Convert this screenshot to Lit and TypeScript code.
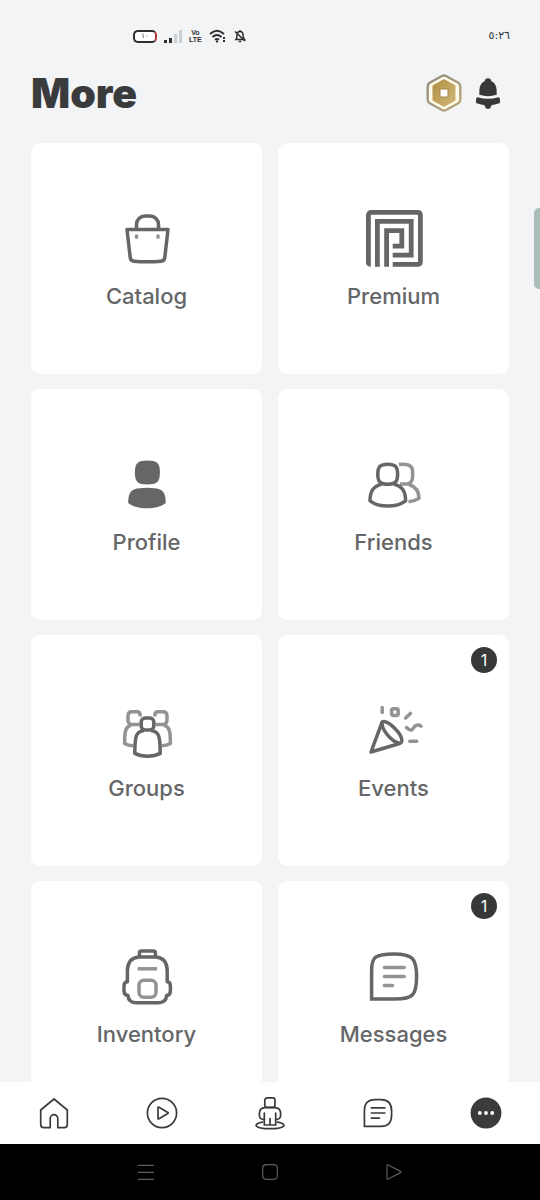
import { LitElement, html, svg, css, nothing } from "lit";
import type { SVGTemplateResult } from "lit";
import { customElement, property } from "lit/decorators.js";

interface Tile {
  label: string;
  icon: SVGTemplateResult;
  count?: number;
}

const catalog = svg`
  <path d="M12 22.5H53L49.8 50.5Q49.4 54 46 54.2Q32.5 55.4 19 54.2Q15.6 54 15.2 50.5Z" />
  <path d="M21.5 22V17.5A8.5 8.5 0 0 1 30 9H35A8.5 8.5 0 0 1 43.5 17.5V22" />
  <ellipse class="soft-fill" cx="21.5" cy="29.5" rx="1.8" ry="2.6" />
  <ellipse class="soft-fill" cx="43" cy="29.5" rx="1.8" ry="2.6" />`;

const premium = svg`
  <g stroke-width="4.8" stroke-linejoin="miter">
    <path d="M6.4 57V8.4Q6.4 5.4 9.4 5.4H55.4Q58.4 5.4 58.4 8.4V54.4Q58.4 57.4 55.4 57.4H30.7" />
    <path class="solid" d="M4 56H8.8V59.8Q4.6 59.8 4 56Z" stroke="none" />
    <path d="M15.4 59.7V14.4H49.2V48.2H30.7" />
    <path d="M24.6 59.7V23.7H39.8V39.2H30.7" />
  </g>`;

const profile = svg`
  <g class="solid" stroke="none">
    <path d="M32.4 7.5C42 7.5 44.9 10 44.9 19.5C44.9 29 42 31.5 32.4 31.5C22.8 31.5 19.9 29 19.9 19.5C19.9 10 22.8 7.5 32.4 7.5Z" />
    <path d="M13.2 50C13.2 39 16.5 35.6 25 35.2Q32 34.4 39 35.2C47.5 35.6 50.8 39 50.8 50C46 53.7 40 55.3 32 55.3S18 53.7 13.2 50Z" />
  </g>`;

const friends = svg`
  <g class="soft">
    <path d="M37 11.4Q40.5 10.9 44 11.4Q50.3 12 50.6 18V23.5Q50.4 30 45.5 31H38" />
    <path d="M47 31.5C54.5 34 57 38.5 57 45.4Q53 48 46.5 48.8" />
  </g>
  <path d="M25.7 11.2C33 11.2 35.6 13.4 35.6 21.2C35.6 29 33 31.2 25.7 31.2C18.4 31.2 15.8 29 15.8 21.2C15.8 13.4 18.4 11.2 25.7 11.2Z" />
  <path d="M19.5 31.2C10.5 33.2 8 39 8 47.8C13 51.5 19 53 25.8 53S38.6 51.5 43.6 47.8C43.6 39 41 33.2 32 31.2" />`;

const groups = svg`
  <g class="soft">
    <path d="M25.2 17.5V16.5Q25 12.8 22 12.8H17Q13.2 12.8 13 16.5V21.5Q13.2 25.2 17 25.6H24.5" />
    <path d="M16 26.2C10.5 28 9.6 32 9.6 44.6Q13 46.6 18.4 46.8" />
    <path d="M39.8 17.5V16.5Q40 12.8 43 12.8H48Q51.8 12.8 52 16.5V21.5Q51.8 25.2 48 25.6H40.5" />
    <path d="M49 26.2C54.5 28 55.4 32 55.4 44.6Q52 46.6 46.6 46.8" />
  </g>
  <rect x="26.2" y="19" width="12.6" height="12" rx="4" />
  <path d="M29 31.4C21 32.4 19.8 37 19.8 54.4Q25 57.2 32.5 57.2T45.2 54.4C45.2 37 44 32.4 36 31.4" />`;

const events = svg`
  <path d="M9 53L20.2 22.8C26 20.8 40.5 35 39.8 42.2Q39.5 44 36 45Z" />
  <path d="M20.2 22.8C18.5 29.3 29 42.8 37.5 44.3" />
  <g class="soft" stroke-linecap="round">
    <path d="M20.2 8.6V13.4" />
    <rect x="29.6" y="9.8" width="6.6" height="6.6" rx="2" />
    <path d="M43.6 19L48.4 14.4" />
    <path d="M44.5 28.6C49 33 50.5 30.5 51.8 28.5S56 25 59 27.2" />
    <path d="M47.8 42.2H54.6" />
  </g>`;

const inventory = svg`
  <path d="M24.4 12V8Q24.4 6 26.4 6H38.4Q40.4 6 40.4 8V12" />
  <path d="M24 12H41Q51.5 12.6 52.2 25V36.8Q55.4 37 55.4 41V46Q55.2 50.2 51.6 50.6Q51 57.6 43.5 57.7H21Q13.6 57.6 13 50.6Q9.2 50.2 9 46V41Q9 37 12.4 36.8V25Q13.1 12.6 24 12Z" />
  <path class="soft" d="M22.6 23.8H42" />
  <rect class="soft" x="24" y="35.2" width="17" height="17" rx="5" />`;

const messages = svg`
  <path stroke-linejoin="miter" d="M9.6 54V26C9.6 12 13 9 32 8.9C50 9 54.6 13 54.6 31.5C54.6 50 51 54 33 54Z" />
  <g class="soft" stroke-linecap="round">
    <path d="M22.4 22.4H42.2M22.4 31.4H42.2M22.4 40.4H30.6" />
  </g>`;

const TILES: Tile[] = [
  { label: "Catalog", icon: catalog },
  { label: "Premium", icon: premium },
  { label: "Profile", icon: profile },
  { label: "Friends", icon: friends },
  { label: "Groups", icon: groups },
  { label: "Events", icon: events, count: 1 },
  { label: "Inventory", icon: inventory },
  { label: "Messages", icon: messages, count: 1 },
];

const TABS: { name: string; icon: SVGTemplateResult }[] = [
  {
    name: "Home",
    icon: svg`<path d="M16 2L29.3 13V27.5Q29.3 30.6 26.3 30.6H19.8V21.5A3.8 3.8 0 0 0 12.2 21.5V30.6H5.7Q2.7 30.6 2.7 27.5V13Z" />`,
  },
  {
    name: "Discover",
    icon: svg`<circle cx="16" cy="16" r="14.6" />
      <path d="M12 10.8Q12 9.6 13 10.2L21.8 15.4Q22.6 16 21.8 16.6L13 21.8Q12 22.4 12 21.2Z" />`,
  },
  {
    name: "Avatar",
    icon: svg`<rect x="10.8" y="0.8" width="10.2" height="9.6" rx="2.4" />
      <path d="M10.4 22.6Q5.6 22.4 5.4 18.5V16Q5.6 11 11 10.6H21Q26.4 11 26.6 16V18.5Q26.4 22.4 21.6 22.6" />
      <path d="M10.3 16V28H21.7V16M16 21.5V28" />
      <path d="M8.5 25.2C-1 26.6-1 31.6 16 31.7C33 31.6 33 26.6 23.5 25.2" />`,
  },
  {
    name: "Chat",
    icon: svg`<path d="M2.4 29.4V14Q2.4 2.6 13 2.6H19Q29.6 2.6 29.6 14V18Q29.6 29.4 19 29.4Z" />
      <path d="M9.4 10.8H22.8M9.4 16H22.8M9.4 21.2H17.4" />`,
  },
  {
    name: "More",
    icon: svg`<circle class="dark" cx="16" cy="16" r="15.4" stroke="none" />
      <g class="light" stroke="none"><circle cx="9.8" cy="16" r="1.9" /><circle cx="16" cy="16" r="1.9" /><circle cx="22.2" cy="16" r="1.9" /></g>`,
  },
];

@customElement("status-bar")
class StatusBar extends LitElement {
  static styles = css`
    :host {
      display: flex;
      align-items: center;
      justify-content: space-between;
      height: 72px;
      padding: 0 30px 0 133px;
      color: #2c2e30;
      font-family: "DejaVu Sans", sans-serif;
    }
    .signals {
      display: flex;
      align-items: center;
      gap: 7px;
    }
    .battery {
      display: flex;
      align-items: center;
      justify-content: center;
      box-sizing: border-box;
      width: 24px;
      height: 13px;
      border: 2px solid #2c2e30;
      border-right-color: #b5343c;
      border-radius: 5px;
      background: #fff;
      font-size: 7px;
      line-height: 8px;
    }
    .volte {
      font: bold 7px/7px "Liberation Sans", sans-serif;
      text-align: center;
    }
    .volte span {
      display: block;
    }
    .time {
      font-size: 11px;
      line-height: 16px;
    }
    svg {
      display: block;
      fill: none;
      stroke: currentColor;
    }
  `;
  render() {
    return html`
      <div class="signals">
        <span class="battery">١٠</span>
        <svg width="18" height="14" viewBox="0 0 18 14" stroke-width="3">
          <path d="M1.5 11V14M6.5 9V14" />
          <path d="M11.5 5V14M16.5 1V14" stroke="#cdd0d2" />
        </svg>
        <span class="volte"><span>Vo</span><span>LTE</span></span>
        <svg width="18" height="14" viewBox="0 0 18 14" stroke-width="2">
          <path d="M1 5Q8 -1.5 15 5M3.5 8Q8 4 12.5 8M6 10.8Q8 9.2 10 10.8" />
          <path d="M8 11.5V13.5M15 8V10M15 11V13" />
        </svg>
        <svg width="12" height="14" viewBox="0 0 12 14" stroke-width="1.5">
          <path d="M2 10.5Q3 9 3 6Q3 2.5 6 2.5T9 6Q9 9 10.5 10.5ZM6 1V2.5M4.8 12.5H7.2M1 2.5L11 12" />
        </svg>
      </div>
      <time class="time">٥:٢٦</time>
    `;
  }
}

@customElement("menu-tile")
class MenuTile extends LitElement {
  @property() label = "";
  @property({ type: Number }) count = 0;
  @property({ attribute: false }) icon?: SVGTemplateResult;

  static styles = css`
    :host {
      display: block;
    }
    .tile {
      position: relative;
      display: flex;
      flex-direction: column;
      align-items: center;
      justify-content: center;
      gap: 11px;
      aspect-ratio: 1;
      border-radius: 9px;
      background: #fff;
      color: #656667;
      text-decoration: none;
      font-size: 22px;
      font-weight: 500;
      line-height: 28px;
    }
    .icon {
      width: 64px;
      height: 64px;
      fill: none;
      stroke: currentColor;
      stroke-width: 3.5;
      stroke-linejoin: round;
    }
    .soft {
      stroke: #929394;
    }
    .soft-fill {
      fill: #929394;
      stroke: none;
    }
    .solid {
      fill: currentColor;
    }
    .badge {
      position: absolute;
      top: 12px;
      right: 12px;
      width: 26px;
      border-radius: 13px;
      background: #36383a;
      color: #fff;
      font-size: 16px;
      font-weight: 400;
      line-height: 26px;
      text-align: center;
    }
  `;
  render() {
    return html`<a class="tile" href="#${this.label.toLowerCase()}">
      <svg class="icon" viewBox="0 0 64 64" aria-hidden="true">${this.icon}</svg>
      <span>${this.label}</span>
      ${this.count ? html`<span class="badge">${this.count}</span>` : nothing}
    </a>`;
  }
}

@customElement("app-root")
class AppRoot extends LitElement {
  static styles = css`
    :host {
      position: relative;
      display: flex;
      flex-direction: column;
      height: 100vh;
      overflow: hidden;
      background: #f2f4f6;
      color: #393b3d;
      font-family: Inter, sans-serif;
    }
    button {
      display: flex;
      align-items: center;
      justify-content: center;
      padding: 0;
      border: 0;
      background: none;
      color: inherit;
      cursor: pointer;
    }
    .header {
      display: flex;
      align-items: center;
      justify-content: space-between;
      height: 42px;
      padding: 0 40px 0 31px;
    }
    .title {
      margin: 0;
      font-size: 41px;
      font-weight: 900;
      line-height: 40px;
    }
    .actions {
      display: flex;
      align-items: center;
      gap: 14px;
    }
    .content {
      flex: 1;
      min-height: 0;
      padding: 29px 31px 0;
      overflow: auto;
      scrollbar-width: none;
    }
    .grid {
      display: grid;
      grid-template-columns: repeat(2, 1fr);
      gap: 15px 16px;
    }
    .tabs {
      display: flex;
      flex: none;
      height: 62px;
      background: #fff;
    }
    .tabs button {
      flex: 1;
    }
    .tabs svg {
      width: 32px;
      height: 32px;
      overflow: visible;
      fill: none;
      stroke: currentColor;
      stroke-width: 1.7;
      stroke-linejoin: round;
      stroke-linecap: round;
    }
    .tabs .dark {
      fill: #393b3d;
    }
    .tabs .light {
      fill: #fff;
    }
    .system {
      display: flex;
      flex: none;
      height: 56px;
      padding: 0 84px;
      background: #000;
      color: #5c5c5c;
    }
    .system button {
      flex: 1;
    }
    .system svg {
      fill: none;
      stroke: currentColor;
      stroke-width: 1.2;
      stroke-linejoin: round;
    }
    .edge-handle {
      position: absolute;
      top: 208px;
      right: 0;
      width: 6px;
      height: 81px;
      border-radius: 5px 0 0 5px;
      background: #abbdba;
    }
  `;
  render() {
    return html`
      <status-bar></status-bar>
      <header class="header">
        <h1 class="title">More</h1>
        <div class="actions">
          <button aria-label="Robux">
            <svg width="36" height="38" viewBox="0 0 108 114">
              <defs>
                <linearGradient id="gold" x1="0" y1="0" x2="1" y2="1">
                  <stop offset="0" stop-color="#b08f45" />
                  <stop offset="1" stop-color="#d3b878" />
                </linearGradient>
                <linearGradient id="rim" x1="0" y1="0" x2="1" y2="1">
                  <stop offset="0" stop-color="#8f8a7c" />
                  <stop offset="1" stop-color="#bda878" />
                </linearGradient>
              </defs>
              <path d="M48 6Q54 3 60 6L97 26Q103 30 103 38V76Q103 84 97 88L60 108Q54 111 48 108L11 88Q5 84 5 76V38Q5 30 11 26Z" fill="#fffbea" stroke="url(#rim)" stroke-width="7" stroke-linejoin="round" />
              <path d="M54 18L86 36V78L54 96L22 78V36Z" fill="url(#gold)" stroke="url(#gold)" stroke-width="5" stroke-linejoin="round" />
              <rect x="42" y="45" width="24" height="24" fill="#fff" stroke="#a58645" stroke-width="3" />
            </svg>
          </button>
          <button aria-label="Notifications">
            <svg width="24" height="31" viewBox="0 0 72 92" fill="#36383a">
              <path d="M36 0Q45 0 46 9Q61 15 62 36V50Q48 54 36 54T10 50V36Q11 15 26 9Q27 0 36 0Z" />
              <path d="M5 57Q36 66 67 57Q72 57 72 64V72Q72 76 67 76Q56 80 46 81Q45 92 36 92T26 81Q16 80 5 76Q0 76 0 72V64Q0 57 5 57Z" />
            </svg>
          </button>
        </div>
      </header>
      <main class="content">
        <div class="grid">
          ${TILES.map(
            (t) => html`<menu-tile .label=${t.label} .icon=${t.icon} .count=${t.count ?? 0}></menu-tile>`,
          )}
        </div>
      </main>
      <nav class="tabs">
        ${TABS.map((t) => html`<button aria-label=${t.name}><svg viewBox="0 0 32 32">${t.icon}</svg></button>`)}
      </nav>
      <div class="system">
        <button aria-label="Recent apps">
          <svg width="16" height="16" viewBox="0 0 16 16"><path d="M0 1.4H16M0 8.4H16M0 15.4H16" /></svg>
        </button>
        <button aria-label="Home screen">
          <svg width="16" height="16" viewBox="0 0 16 16"><rect x="0.7" y="0.7" width="14.6" height="14.6" rx="3.5" /></svg>
        </button>
        <button aria-label="Back">
          <svg width="16" height="16" viewBox="0 0 16 16"><path d="M1 1.5Q1 0.6 2 1L14.6 7.4Q15.6 8 14.6 8.6L2 15Q1 15.4 1 14.5Z" /></svg>
        </button>
      </div>
      <div class="edge-handle"></div>
    `;
  }
}
